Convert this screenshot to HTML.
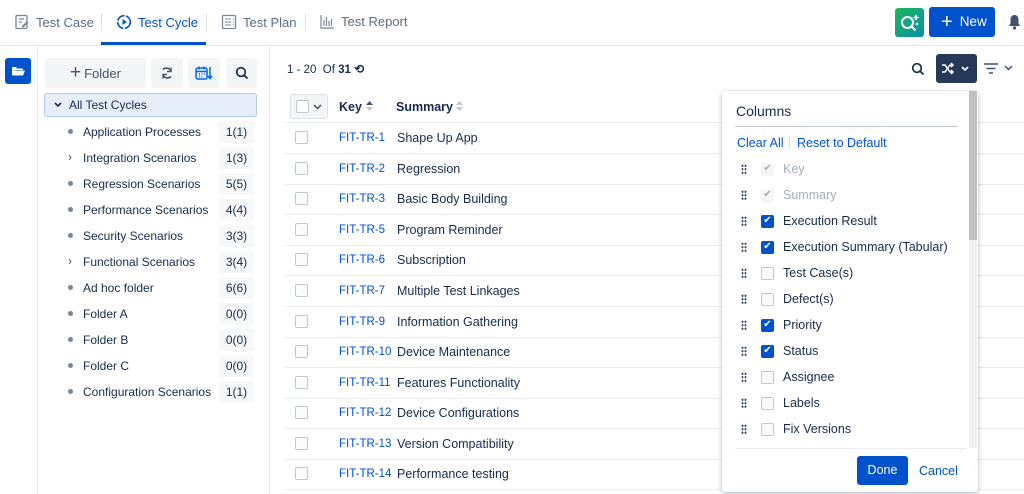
<!DOCTYPE html><html><head><style>
*{box-sizing:border-box;margin:0;padding:0}
body{width:1024px;height:494px;overflow:hidden;background:#fff;font-family:"Liberation Sans",sans-serif;font-size:12.5px;color:#172b4d;position:relative}
.a{position:absolute}
.tab{position:absolute;top:14px;font-size:13px;color:#5e6c84;display:flex;align-items:center;gap:6px}
.sep{position:absolute;top:13px;width:1px;height:18px;background:#dfe1e6}
.btn{position:absolute;top:58px;height:30px;background:#f4f5f7;border-radius:3px;display:flex;align-items:center;justify-content:center;color:#42526e}
.ti{position:absolute;left:68px;font-size:12px;color:#172b4d}
.cnt{position:absolute;left:219px;width:35px;height:22px;background:#f7f8f9;text-align:center;line-height:22px;font-size:12px}
.dot{position:absolute;left:68px;width:5px;height:5px;border-radius:50%;background:#7a869a}
.row{position:absolute;left:284px;width:740px;height:1px;background:#ebecf0}
.cb{position:absolute;left:295px;width:13px;height:13px;border:1px solid #c1c7d0;border-radius:2px;background:#fafbfc}
.key{position:absolute;left:339px;color:#0052cc;font-size:11.5px}
.sum{position:absolute;left:397px;font-size:12.5px}
.pi{position:absolute;left:741px;display:flex;align-items:center;font-size:12.5px}
.drag{width:6px;height:10px;background-image:radial-gradient(circle,#42526e 1px,transparent 1.2px);background-size:3px 3.5px;margin-right:14px}
.pc{width:13px;height:13px;border:1px solid #c1c7d0;border-radius:2px;background:#fafbfc;margin-right:9px;display:flex;align-items:center;justify-content:center;color:#fff;font-size:10px;line-height:1}
.pc.on{background:#0052cc;border-color:#0052cc}
.pc.dis{background:#f4f5f7;border-color:#f4f5f7;color:#a5adba}
</style></head><body>
<div class="tab" style="left:14px"><svg width="16" height="16" viewBox="0 0 16 16"><rect x="2" y="1.5" width="11" height="13" rx="1" fill="none" stroke="#7a869a" stroke-width="1.3"/><path d="M5 5h5M5 8h3" stroke="#7a869a" stroke-width="1.2"/><path d="M8 12l5-5 1.5 1.5-5 5H8z" fill="#7a869a"/></svg>Test Case</div>
<div class="sep" style="left:101px"></div>
<div class="tab" style="left:116px;color:#0052cc"><svg width="16" height="16" viewBox="0 0 16 16"><circle cx="8" cy="8" r="6.3" fill="none" stroke="#0052cc" stroke-width="1.6" stroke-dasharray="9 1.5"/><path d="M6.5 5v6l4.5-3z" fill="#0052cc"/></svg>Test Cycle</div>
<div class="a" style="left:101px;top:42px;width:105px;height:3px;background:#0052cc"></div>
<div class="sep" style="left:206px"></div>
<div class="tab" style="left:221px"><svg width="16" height="16" viewBox="0 0 16 16"><rect x="1.5" y="1.5" width="13" height="13" rx="1" fill="none" stroke="#7a869a" stroke-width="1.3"/><path d="M4 5h6M4 8h6M4 11h6M12 5h1M12 8h1M12 11h1" stroke="#7a869a" stroke-width="1.1"/></svg>Test Plan</div>
<div class="sep" style="left:305px"></div>
<div class="tab" style="left:320px"><svg width="15" height="15" viewBox="0 0 15 15"><path d="M1 1v13h13M4 12V6M6.5 12V3M9 12V7M11.5 12V5" stroke="#7a869a" stroke-width="1.2" fill="none"/></svg>Test Report</div>
<div class="a" style="left:895px;top:8px;width:29px;height:29px;border-radius:3px;background:linear-gradient(135deg,#1fb85a,#0a8fa8)"><svg width="29" height="29" viewBox="0 0 29 29"><circle cx="12.5" cy="14.5" r="5.5" fill="none" stroke="#fff" stroke-width="2"/><path d="M16.5 18.5l4 4" stroke="#fff" stroke-width="2"/><path d="M21 6l1 2.5 2.5 1-2.5 1-1 2.5-1-2.5-2.5-1 2.5-1z M22 14l.6 1.4 1.4.6-1.4.6-.6 1.4-.6-1.4-1.4-.6 1.4-.6z" fill="#fff"/></svg></div>
<div class="a" style="left:929px;top:7px;width:66px;height:30px;border-radius:3px;background:#0052cc;color:#fff;font-size:13.5px;line-height:30px;padding-left:12px"><span style="font-size:20px;vertical-align:-2px;margin-right:7px">+</span>New</div>
<svg class="a" style="left:1008px;top:14px" width="13" height="16" viewBox="0 0 13 16"><path d="M6.5 1c-2.5 0-4 2-4 4.5v4L1 12h11l-1.5-2.5v-4C10.5 3 9 1 6.5 1z" fill="#42526e"/><circle cx="6.5" cy="14" r="1.6" fill="#42526e"/></svg>
<div class="a" style="left:0;top:45px;width:1024px;height:1px;background:#e5e7eb"></div>
<div class="a" style="left:37px;top:46px;width:1px;height:448px;background:#e5e7eb"></div>
<div class="a" style="left:5px;top:58px;width:26px;height:26px;background:#0052cc;border-radius:3px"><svg width="26" height="26" viewBox="0 0 26 26"><path d="M7 9h4l1 1.5h6v1.5H10l-2 5H7z" fill="#fff"/><path d="M9.5 12.5h10.5l-2 5H7.5z" fill="#fff"/></svg></div>
<div class="a" style="left:269px;top:46px;width:1px;height:448px;background:#e5e7eb"></div>
<div class="btn" style="left:45px;width:101px;font-size:13px"><span style="font-size:19px;margin-right:3px;font-weight:300">+</span>Folder</div>
<div class="btn" style="left:151px;width:32px"><svg width="14" height="14" viewBox="0 0 14 14"><path d="M3 3.5A5 5 0 0 1 11 5M11 10.5A5 5 0 0 1 3 9" fill="none" stroke="#42526e" stroke-width="1.6"/><path d="M11 1.5v4h-4M3 12.5v-4h4" fill="none" stroke="#42526e" stroke-width="1.4"/></svg></div>
<div class="btn" style="left:188px;width:32px"><svg width="18" height="16" viewBox="0 0 18 16"><rect x="1" y="3" width="11" height="11" rx="2" fill="none" stroke="#0065ff" stroke-width="1.5"/><path d="M1 6.5h11M4 1.5v3M9 1.5v3" stroke="#0065ff" stroke-width="1.5"/><path d="M4 9h1M6.5 9h1M9 9h1M4 11.5h1M6.5 11.5h1" stroke="#0065ff" stroke-width="1.4"/><path d="M15 2v11M13 11l2 2.5 2-2.5" fill="none" stroke="#0065ff" stroke-width="1.5"/></svg></div>
<div class="btn" style="left:226px;width:31px"><svg width="14" height="14" viewBox="0 0 14 14"><circle cx="6" cy="6" r="4.3" fill="none" stroke="#172b4d" stroke-width="1.7"/><path d="M9.2 9.2l3.3 3.3" stroke="#172b4d" stroke-width="1.8"/></svg></div>
<div class="a" style="left:44px;top:93px;width:213px;height:24px;background:#e6eefa;border:1px solid #b3c8ee;border-radius:3px"></div>
<svg class="a" style="left:54px;top:102px" width="8" height="6" viewBox="0 0 8 6"><path d="M1 1l3 3 3-3" fill="none" stroke="#172b4d" stroke-width="1.6"/></svg>
<div class="ti" style="left:69px;top:98px">All Test Cycles</div>
<div class="dot" style="top:129px"></div><div class="ti" style="left:83px;top:125px">Application Processes</div><div class="cnt" style="top:121px">1(1)</div>
<div class="a" style="left:68px;top:150px;font-size:12px;color:#42526e">›</div><div class="ti" style="left:83px;top:151px">Integration Scenarios</div><div class="cnt" style="top:147px">1(3)</div>
<div class="dot" style="top:181px"></div><div class="ti" style="left:83px;top:177px">Regression Scenarios</div><div class="cnt" style="top:173px">5(5)</div>
<div class="dot" style="top:207px"></div><div class="ti" style="left:83px;top:203px">Performance Scenarios</div><div class="cnt" style="top:199px">4(4)</div>
<div class="dot" style="top:233px"></div><div class="ti" style="left:83px;top:229px">Security Scenarios</div><div class="cnt" style="top:225px">3(3)</div>
<div class="a" style="left:68px;top:254px;font-size:12px;color:#42526e">›</div><div class="ti" style="left:83px;top:255px">Functional Scenarios</div><div class="cnt" style="top:251px">3(4)</div>
<div class="dot" style="top:285px"></div><div class="ti" style="left:83px;top:281px">Ad hoc folder</div><div class="cnt" style="top:277px">6(6)</div>
<div class="dot" style="top:311px"></div><div class="ti" style="left:83px;top:307px">Folder A</div><div class="cnt" style="top:303px">0(0)</div>
<div class="dot" style="top:337px"></div><div class="ti" style="left:83px;top:333px">Folder B</div><div class="cnt" style="top:329px">0(0)</div>
<div class="dot" style="top:363px"></div><div class="ti" style="left:83px;top:359px">Folder C</div><div class="cnt" style="top:355px">0(0)</div>
<div class="dot" style="top:389px"></div><div class="ti" style="left:83px;top:385px">Configuration Scenarios</div><div class="cnt" style="top:381px">1(1)</div>
<div class="a" style="left:287px;top:62px;font-size:11.5px">1 - 20 &nbsp;Of <b>31</b> <b style="font-size:12px">⟲</b></div>
<svg class="a" style="left:911px;top:62px" width="14" height="14" viewBox="0 0 14 14"><circle cx="6" cy="6" r="4.3" fill="none" stroke="#172b4d" stroke-width="1.7"/><path d="M9.2 9.2l3.3 3.3" stroke="#172b4d" stroke-width="1.8"/></svg>
<div class="a" style="left:936px;top:54px;width:41px;height:29px;background:#253858;border-radius:3px"><svg width="41" height="29" viewBox="0 0 41 29"><path d="M6 11h3l5 7h3M6 18h3l5-7h3M15 9l2 2-2 2M15 16l2 2-2 2" fill="none" stroke="#fff" stroke-width="1.5"/><path d="M26 13l3 3 3-3" fill="none" stroke="#fff" stroke-width="1.6"/></svg></div>
<svg class="a" style="left:983px;top:61px" width="34" height="16" viewBox="0 0 34 16"><path d="M1 3h14M3.5 7.5h9M6 12h4" stroke="#42526e" stroke-width="1.5"/><path d="M22 5l3.5 3.5L29 5" fill="none" stroke="#42526e" stroke-width="1.5"/></svg>
<div class="a" style="left:290px;top:94px;width:38px;height:25px;border:1px solid #dfe1e6;border-radius:3px;background:#f4f5f7"></div>
<div class="a" style="left:296px;top:100px;width:13px;height:13px;border:1px solid #c1c7d0;border-radius:2px;background:#fff"></div>
<svg class="a" style="left:313px;top:104px" width="9" height="6" viewBox="0 0 9 6"><path d="M1 1l3.5 3.5L8 1" fill="none" stroke="#42526e" stroke-width="1.5"/></svg>
<div class="a" style="left:339px;top:100px;font-weight:bold;font-size:12.5px">Key</div>
<svg class="a" style="left:365px;top:100px" width="9" height="12" viewBox="0 0 9 12"><path d="M1 5l3.5-4L8 5z" fill="#42526e"/><path d="M1 7l3.5 4L8 7z" fill="#c1c7d0"/></svg>
<div class="a" style="left:396px;top:100px;font-weight:bold;font-size:12.5px">Summary</div>
<svg class="a" style="left:455px;top:100px" width="9" height="12" viewBox="0 0 9 12"><path d="M1 5l3.5-4L8 5zM1 7l3.5 4L8 7z" fill="#c1c7d0"/></svg>
<div class="row" style="top:122px"></div>
<div class="cb" style="top:131px"></div><div class="key" style="top:132px">FIT-TR-1</div><div class="sum" style="top:131px">Shape Up App</div><div class="row" style="top:153px"></div>
<div class="cb" style="top:162px"></div><div class="key" style="top:163px">FIT-TR-2</div><div class="sum" style="top:162px">Regression</div><div class="row" style="top:184px"></div>
<div class="cb" style="top:192px"></div><div class="key" style="top:193px">FIT-TR-3</div><div class="sum" style="top:192px">Basic Body Building</div><div class="row" style="top:214px"></div>
<div class="cb" style="top:223px"></div><div class="key" style="top:224px">FIT-TR-5</div><div class="sum" style="top:223px">Program Reminder</div><div class="row" style="top:245px"></div>
<div class="cb" style="top:253px"></div><div class="key" style="top:254px">FIT-TR-6</div><div class="sum" style="top:253px">Subscription</div><div class="row" style="top:275px"></div>
<div class="cb" style="top:284px"></div><div class="key" style="top:285px">FIT-TR-7</div><div class="sum" style="top:284px">Multiple Test Linkages</div><div class="row" style="top:306px"></div>
<div class="cb" style="top:315px"></div><div class="key" style="top:316px">FIT-TR-9</div><div class="sum" style="top:315px">Information Gathering</div><div class="row" style="top:337px"></div>
<div class="cb" style="top:345px"></div><div class="key" style="top:346px">FIT-TR-10</div><div class="sum" style="top:345px">Device Maintenance</div><div class="row" style="top:367px"></div>
<div class="cb" style="top:376px"></div><div class="key" style="top:377px">FIT-TR-11</div><div class="sum" style="top:376px">Features Functionality</div><div class="row" style="top:398px"></div>
<div class="cb" style="top:406px"></div><div class="key" style="top:407px">FIT-TR-12</div><div class="sum" style="top:406px">Device Configurations</div><div class="row" style="top:428px"></div>
<div class="cb" style="top:437px"></div><div class="key" style="top:438px">FIT-TR-13</div><div class="sum" style="top:437px">Version Compatibility</div><div class="row" style="top:459px"></div>
<div class="cb" style="top:467px"></div><div class="key" style="top:468px">FIT-TR-14</div><div class="sum" style="top:467px">Performance testing</div><div class="row" style="top:489px"></div>
<div class="a" style="left:722px;top:91px;width:256px;height:401px;background:#fff;border-radius:3px;box-shadow:0 2px 6px rgba(9,30,66,.25),0 0 1px rgba(9,30,66,.3)"></div>
<div class="a" style="left:969px;top:91px;width:8px;height:357px;background:#f1f1f1"></div>
<div class="a" style="left:969px;top:91px;width:8px;height:149px;background:#c1c1c1"></div>
<div class="a" style="left:736px;top:103px;font-size:14px;color:#172b4d">Columns</div>
<div class="a" style="left:735px;top:126px;width:223px;height:1px;background:#c1c7d0"></div>
<div class="a" style="left:737px;top:136px;color:#0052cc;font-size:12.5px">Clear All</div>
<div class="a" style="left:789px;top:136px;width:1px;height:13px;background:#dfe1e6"></div>
<div class="a" style="left:797px;top:136px;color:#0052cc;font-size:12.5px">Reset to Default</div>
<div class="pi" style="top:162px;color:#a5adba"><div class="drag"></div><div class="pc dis">✔</div>Key</div>
<div class="pi" style="top:188px;color:#a5adba"><div class="drag"></div><div class="pc dis">✔</div>Summary</div>
<div class="pi" style="top:214px"><div class="drag"></div><div class="pc on">✔</div>Execution Result</div>
<div class="pi" style="top:240px"><div class="drag"></div><div class="pc on">✔</div>Execution Summary (Tabular)</div>
<div class="pi" style="top:266px"><div class="drag"></div><div class="pc"></div>Test Case(s)</div>
<div class="pi" style="top:292px"><div class="drag"></div><div class="pc"></div>Defect(s)</div>
<div class="pi" style="top:318px"><div class="drag"></div><div class="pc on">✔</div>Priority</div>
<div class="pi" style="top:344px"><div class="drag"></div><div class="pc on">✔</div>Status</div>
<div class="pi" style="top:370px"><div class="drag"></div><div class="pc"></div>Assignee</div>
<div class="pi" style="top:396px"><div class="drag"></div><div class="pc"></div>Labels</div>
<div class="pi" style="top:422px"><div class="drag"></div><div class="pc"></div>Fix Versions</div>
<div class="a" style="left:735px;top:448px;width:231px;height:1px;background:#ebecf0"></div>
<div class="a" style="left:857px;top:456px;width:51px;height:29px;background:#0052cc;border-radius:3px;color:#fff;text-align:center;line-height:29px;font-size:12.5px">Done</div>
<div class="a" style="left:919px;top:464px;color:#0052cc;font-size:12.5px">Cancel</div>
</body></html>
